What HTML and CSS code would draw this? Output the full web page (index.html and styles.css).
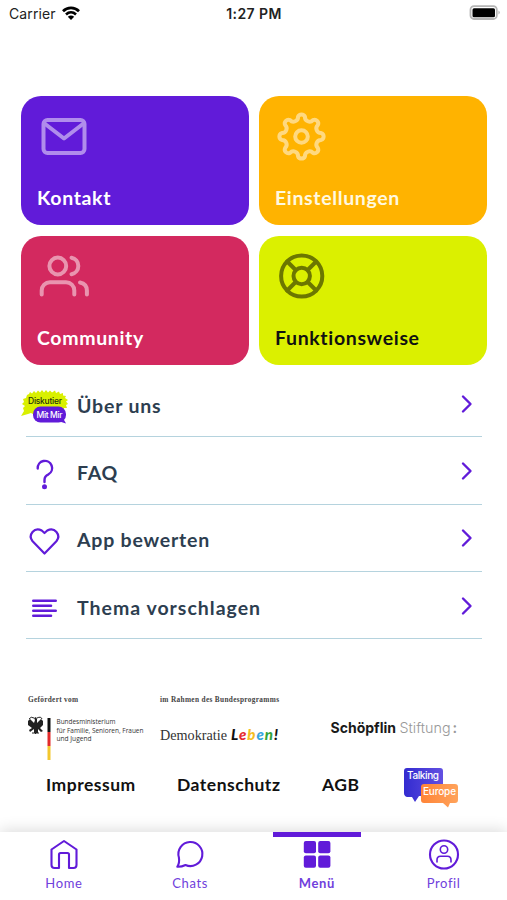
FILE: index.html
```
<!DOCTYPE html>
<html lang="de">
<head>
  <meta charset="utf-8">
  <title>Menü</title>
  <link rel="stylesheet" href="styles.css">
</head>
<body>
  <div class="status">
    <div class="carrier">
      <span>Carrier</span>
      <svg width="20" height="16" viewBox="0 0 20 16">
        <path d="M2 6.200C6.500 1.700 13.500 1.700 18 6.200M5 9.400C8 6.700 12 6.700 15 9.400" fill="none" stroke="#000" stroke-width="2.700"/>
        <path d="M10 15L6.800 11.700Q10 9.200 13.200 11.700Z"/>
      </svg>
    </div>
    <span class="time">1:27 PM</span>
    <svg class="battery" width="32" height="16" viewBox="0 0 32 16">
      <rect x="1.500" y="1.200" width="26.300" height="12.800" rx="3.500" fill="#fff" stroke="#b5b5b5" stroke-width="1.800"/>
      <rect x="3.500" y="3.200" width="22.500" height="9" rx="1.500"/>
      <path d="M29.500 5.500Q32 7.500 29.500 9.500Z" fill="#aaa"/>
    </svg>
  </div>

  <main>
    <div class="cards">
      <a class="card kontakt">
        <svg class="icon" viewBox="0 0 54 54">
          <rect x="6.500" y="11" width="41" height="33" rx="4"/>
          <path d="M7.500 14.500L27 29.500L46.500 14.500"/>
        </svg>
        <span>Kontakt</span>
      </a>
      <a class="card einstellungen">
        <svg class="icon" viewBox="-26.500 -27.500 54 54">
          <path d="M19.700 -3.470A3.700 3.700 0 0 1 19.700 3.470A4.600 4.600 0 0 0 16.380 11.470A3.700 3.700 0 0 1 11.470 16.380A4.600 4.600 0 0 0 3.470 19.700A3.700 3.700 0 0 1 -3.470 19.700A4.600 4.600 0 0 0 -11.470 16.380A3.700 3.700 0 0 1 -16.380 11.470A4.600 4.600 0 0 0 -19.700 3.470A3.700 3.700 0 0 1 -19.700 -3.470A4.600 4.600 0 0 0 -16.380 -11.470A3.700 3.700 0 0 1 -11.470 -16.380A4.600 4.600 0 0 0 -3.470 -19.700A3.700 3.700 0 0 1 3.470 -19.700A4.600 4.600 0 0 0 11.470 -16.380A3.700 3.700 0 0 1 16.380 -11.470A4.600 4.600 0 0 0 19.700 -3.470Z"/>
          <circle r="6.300"/>
        </svg>
        <span>Einstellungen</span>
      </a>
      <a class="card community">
        <svg class="icon" viewBox="0 0 54 54">
          <circle cx="20.800" cy="17" r="8.400"/>
          <path d="M34.500 8.700A8.400 8.400 0 0 1 34.500 25.200"/>
          <path d="M4.700 45.500V41.500A8.300 8.300 0 0 1 13 33.200H29A8.300 8.300 0 0 1 37.300 41.500V45.500M43 33.500C47.500 34.500 49.900 37.500 49.900 41.500V45.500"/>
        </svg>
        <span>Community</span>
      </a>
      <a class="card funktionsweise">
        <svg class="icon" viewBox="0 0 54 54">
          <circle cx="26.700" cy="27" r="20.600"/>
          <circle cx="26.700" cy="27" r="8.200"/>
          <path d="M12.200 12.500L20.700 21M32.700 33L41.200 41.500M41.200 12.500L32.700 21M20.700 33L12.200 41.500"/>
        </svg>
        <span>Funktionsweise</span>
      </a>
    </div>

    <div class="list">
      <a class="row">
        <svg class="row-icon" viewBox="0 0 48 44">
          <path d="M6 6L8 5L9 3L11 4.500L13 2L15 4L17 1.500L19 3.500L21 1L23 3.500L25 1L27 3.500L29 1.500L31 3.500L34 1.500L35 4L38 2.500L39 5L42 4L42 6.500L45 7L44 9L47 11L45 12.500L47 15L45 16L46 19L43 19V22L39 21V25H12L10 24L7 25L0 27L3 22L2 19L4 17L1 15L3 13L2 10L5 9Z" fill="#d9f000"/>
          <rect x="12" y="17.500" width="33" height="16" rx="7.500" fill="#611bd9"/>
          <path d="M37 32L45 34.500L42 29Z" fill="#611bd9"/>
          <text x="7" y="15.300" textLength="34" class="logo-top">Diskutier</text>
          <text x="15.500" y="28.800" textLength="26" class="logo-bottom">Mit Mir</text>
        </svg>
        <span>Über uns</span>
        <svg class="chevron" viewBox="0 0 14 22"><path d="M3 3.500L10.500 11L3 18.500"/></svg>
      </a>
      <a class="row">
        <svg class="row-icon" viewBox="0 0 48 44">
          <path d="M16.700 12.500A7.200 7.200 0 1 1 27.500 18.300Q23.500 20 23.500 24V26" stroke-width="2.400"/>
          <circle cx="23.500" cy="30.700" r="2.500" class="solid"/>
        </svg>
        <span>FAQ</span>
        <svg class="chevron" viewBox="0 0 14 22"><path d="M3 3.500L10.500 11L3 18.500"/></svg>
      </a>
      <a class="row">
        <svg class="row-icon" viewBox="0 0 48 44">
          <path d="M23.500 29.500L11.600 17.300C6.500 11 13.500 2.500 20.700 6.500L23.500 9L26.300 6.500C33.500 2.500 40.500 11 35.400 17.300Z"/>
        </svg>
        <span>App bewerten</span>
        <svg class="chevron" viewBox="0 0 14 22"><path d="M3 3.500L10.500 11L3 18.500"/></svg>
      </a>
      <a class="row">
        <svg class="row-icon" viewBox="0 0 48 44">
          <path d="M12.300 9.700H34.700M12.300 14.700H30M12.300 19.700H34.700M12.300 24.700H30" stroke-width="2.600"/>
        </svg>
        <span class="thema">Thema vorschlagen</span>
        <svg class="chevron" viewBox="0 0 14 22"><path d="M3 3.500L10.500 11L3 18.500"/></svg>
      </a>
    </div>

    <div class="sponsors">
      <svg class="ministerium" viewBox="0 0 120 70">
        <text x="0" y="10" textLength="50" class="small-serif">Gefördert vom</text>
        <!-- Bundesadler -->
        <g fill="#222">
          <path d="M7 28L6 26L8 25L9 27L9 31L13 27L15 29L15 33L12 36L15 39L13 40L10 37L10 41H6V37L2 40L1 38L4 36L0 33V29L2 27L6 31Z"/>
          <path d="M1 27Q3 24 6 26M9 26Q13 24 14 27M3 29V34M12 29V34M7.500 36V42M4 41H11" stroke="#222" fill="none"/>
        </g>
        <rect x="19.500" y="26" width="3" height="14" fill="#111"/>
        <rect x="19.500" y="40" width="3" height="14" fill="#e22b2b"/>
        <rect x="19.500" y="54" width="3" height="14" fill="#f3c72e"/>
        <text x="28.500" y="32" textLength="59" lengthAdjust="spacingAndGlyphs" class="bund">Bundesministerium</text>
        <text x="28.500" y="40.500" textLength="87" lengthAdjust="spacingAndGlyphs" class="bund">für Familie, Senioren, Frauen</text>
        <text x="28.500" y="49" textLength="35" lengthAdjust="spacingAndGlyphs" class="bund">und Jugend</text>
      </svg>
      <svg class="demokratie" viewBox="0 0 122 70">
        <text x="0" y="10" textLength="119" class="small-serif">im Rahmen des Bundesprogramms</text>
        <text x="0" y="48" textLength="67" lengthAdjust="spacingAndGlyphs" class="demo">Demokratie</text>
        <text x="71" y="48" class="leben" textLength="47"><tspan fill="#111">L</tspan><tspan fill="#e62b32">e</tspan><tspan fill="#f5bd22">b</tspan><tspan fill="#35a5de">e</tspan><tspan fill="#36a43b">n</tspan><tspan fill="#111">!</tspan></text>
      </svg>
      <svg class="stiftung" viewBox="0 0 130 70">
        <text x="0.500" y="40.500" textLength="65.500" lengthAdjust="spacingAndGlyphs" class="schoepflin">Schöpflin</text>
        <text x="69.500" y="40.500" textLength="51" lengthAdjust="spacingAndGlyphs" class="stift">Stiftung</text>
        <text x="122.500" y="40.500" class="colon">:</text>
      </svg>
    </div>

    <div class="links">
      <a>Impressum</a>
      <a>Datenschutz</a>
      <a>AGB</a>
      <svg class="talking" viewBox="0 0 56 40">
        <defs>
          <linearGradient id="blue"><stop stop-color="#332bd0"/><stop offset="1" stop-color="#6250e2"/></linearGradient>
          <linearGradient id="orange"><stop stop-color="#ff8437"/><stop offset="1" stop-color="#ffa35b"/></linearGradient>
        </defs>
        <path d="M3 0H36Q39 0 39 3V25Q39 28 36 28H15L11 34L8 29H3Q0 28 0 25V3Q0 0 3 0Z" fill="url(#blue)"/>
        <path d="M20 16H51Q54 16 54 19V32Q54 35 51 35H46L44 39.500L39 35H20Q17 35 17 32V19Q17 16 20 16Z" fill="url(#orange)"/>
        <text x="3" y="11" textLength="32">Talking</text>
        <text x="19" y="27" textLength="33">Europe</text>
      </svg>
    </div>
  </main>

  <nav>
    <a>
      <svg viewBox="0 0 32 32">
        <path d="M16 3L28.500 11.500V27Q28.500 30 25.500 30H21V16.500Q21 15 19.500 15H12.500Q11 15 11 16.500V30H6.500Q3.500 30 3.500 27V11.500Z"/>
      </svg>
      <span>Home</span>
    </a>
    <a>
      <svg viewBox="0 0 32 32">
        <path d="M4.900 19.500A12 12 0 1 1 11.500 27Q7.500 29 3.300 28.800Q5.800 25 4.900 19.500Z"/>
      </svg>
      <span>Chats</span>
    </a>
    <a class="active">
      <svg viewBox="0 0 32 32">
        <g class="solid">
          <rect x="2.800" y="3" width="12.200" height="12.200" rx="2"/>
          <rect x="17.200" y="3" width="12.200" height="12.200" rx="2"/>
          <rect x="2.800" y="17.500" width="12.200" height="12.200" rx="2"/>
          <rect x="17.200" y="17.500" width="12.200" height="12.200" rx="2"/>
        </g>
      </svg>
      <span>Menü</span>
    </a>
    <a>
      <svg viewBox="0 0 32 32">
        <circle cx="16" cy="16.500" r="14"/>
        <circle cx="16" cy="11.500" r="3.700" stroke-width="1.600"/>
        <path d="M9 24V22Q9 18.300 12.500 18.300H19.500Q23 18.300 23 22V24" stroke-width="1.600"/>
      </svg>
      <span>Profil</span>
    </a>
  </nav>
</body>
</html>
```
FILE: styles.css
```
* {
  box-sizing: border-box;
}

body {
  display: flex;
  flex-direction: column;
  width: 507px;
  height: 900px;
  margin: 0;
  overflow: hidden;
  font-family: Lato, sans-serif;
  background-color: #fff;
}

.status {
  display: grid;
  grid-template-columns: 1fr auto 1fr;
  align-items: center;
  height: 28px;
  padding: 0 6px 2px 9px;
  font-family: Inter, sans-serif;
  font-size: 14px;
  color: #222;
}

.carrier {
  display: flex;
  align-items: center;
  gap: 5px;
  letter-spacing: 0.1px;
}

.time {
  margin-right: 2px;
  font-weight: 600;
  letter-spacing: 0.4px;
}

.battery {
  justify-self: end;
}

main {
  height: 804px;
  padding: 68px 20px 0 21px;
}

.cards {
  display: grid;
  grid-template-columns: 228px 228px;
  grid-auto-rows: 129px;
  gap: 11px 10px;
}

.card {
  display: flex;
  flex-direction: column;
  justify-content: space-between;
  padding: 13px 16px 15px;
  border-radius: 20px;
  color: #fff;
  font-size: 19.5px;
  font-weight: 700;
  line-height: 24px;
  letter-spacing: 0.65px;
}

.icon {
  width: 54px;
  height: 54px;
  fill: none;
  stroke: #fff;
  stroke-width: 4;
  stroke-linecap: round;
  stroke-linejoin: round;
  opacity: 0.5;
}

.kontakt {
  background-color: #611bd9;
}

.einstellungen {
  background-color: #ffb300;
  color: #fff9e0;
}

.community {
  background-color: #d3295f;
}

.funktionsweise {
  background-color: #dbf000;
  color: #111;
}

.funktionsweise .icon {
  stroke: #000;
}

.list {
  margin: 5px 5px 0;
}

.row {
  display: flex;
  align-items: center;
  height: 67.3px;
  border-bottom: 1.5px solid #b5d3de;
  color: #2d3e50;
  font-size: 19.5px;
  font-weight: 700;
  letter-spacing: 0.8px;
}

.row span {
  flex: 1;
  padding-top: 4px;
}

.row .thema {
  letter-spacing: 1px;
}

.row-icon {
  width: 48px;
  height: 44px;
  margin: 16px 8px 0 -5px;
  fill: none;
  stroke: #611bd9;
  stroke-width: 2.2;
  stroke-linecap: round;
  stroke-linejoin: round;
}

.row-icon text,
.row-icon [fill] {
  stroke: none;
}

.solid {
  fill: #611bd9;
  stroke: none;
}

.logo-top,
.logo-bottom {
  font-family: Inter, sans-serif;
  font-size: 8.5px;
  font-weight: 500;
  letter-spacing: 0;
  fill: #28300d;
}

.logo-bottom {
  fill: #fff;
}

.chevron {
  width: 14px;
  height: 22px;
  margin: 1px 8px 0 0;
  fill: none;
  stroke: #611bd9;
  stroke-width: 2.4;
  stroke-linecap: round;
  stroke-linejoin: round;
}

.sponsors {
  display: flex;
  height: 70px;
  margin: 53px 0 0 7px;
}

.sponsors svg {
  height: 70px;
  overflow: visible;
}

.ministerium {
  width: 120px;
  margin-right: 12px;
}

.demokratie {
  width: 122px;
  margin-right: 48px;
}

.stiftung {
  width: 130px;
}

.small-serif {
  font-family: "Liberation Serif", serif;
  font-size: 7.3px;
  font-weight: 700;
  fill: #444;
}

.bund {
  font-family: "Open Sans", sans-serif;
  font-size: 7.4px;
  fill: #333;
}

.demo {
  font-family: "Liberation Serif", serif;
  font-size: 15px;
  fill: #333;
}

.leben {
  font-family: Lato, sans-serif;
  font-size: 15px;
  font-style: italic;
  font-weight: 900;
}

.schoepflin {
  font-family: Inter, sans-serif;
  font-size: 14.5px;
  font-weight: 700;
  fill: #1a1a1a;
}

.stift,
.colon {
  font-family: Inter, sans-serif;
  font-size: 14.5px;
  font-weight: 300;
  fill: #999;
}

.colon {
  font-weight: 600;
}

.links {
  display: grid;
  grid-template-columns: 131px 145px 82px 56px;
  align-items: center;
  height: 40px;
  margin: 6px 0 0 25px;
  color: #111;
  font-size: 17.5px;
  font-weight: 700;
  letter-spacing: 0.5px;
}

.links a {
  padding-bottom: 7px;
}

.talking {
  width: 56px;
  height: 40px;
  font-family: Inter, sans-serif;
  font-size: 10px;
  font-weight: 500;
  letter-spacing: 0;
  fill: #fff;
}

nav {
  display: grid;
  grid-template-columns: repeat(4, 1fr);
  height: 68px;
  background-color: #fff;
  box-shadow: 0 -2px 14px rgba(0, 0, 0, 0.14);
}

nav a {
  display: flex;
  flex-direction: column;
  align-items: center;
  color: #7040dc;
  font-size: 13px;
  line-height: 16px;
  letter-spacing: 0.6px;
}

nav a:first-child {
  padding-left: 1px;
}

nav svg {
  width: 32px;
  height: 32px;
  margin: 6px 0 5px;
  fill: none;
  stroke: #611bd9;
  stroke-width: 2.1;
  stroke-linecap: round;
  stroke-linejoin: round;
}

.active {
  width: 88px;
  margin: 0 auto;
  border-top: 5px solid #611bd9;
  font-weight: 700;
}

.active svg {
  margin-top: 1px;
}
```
